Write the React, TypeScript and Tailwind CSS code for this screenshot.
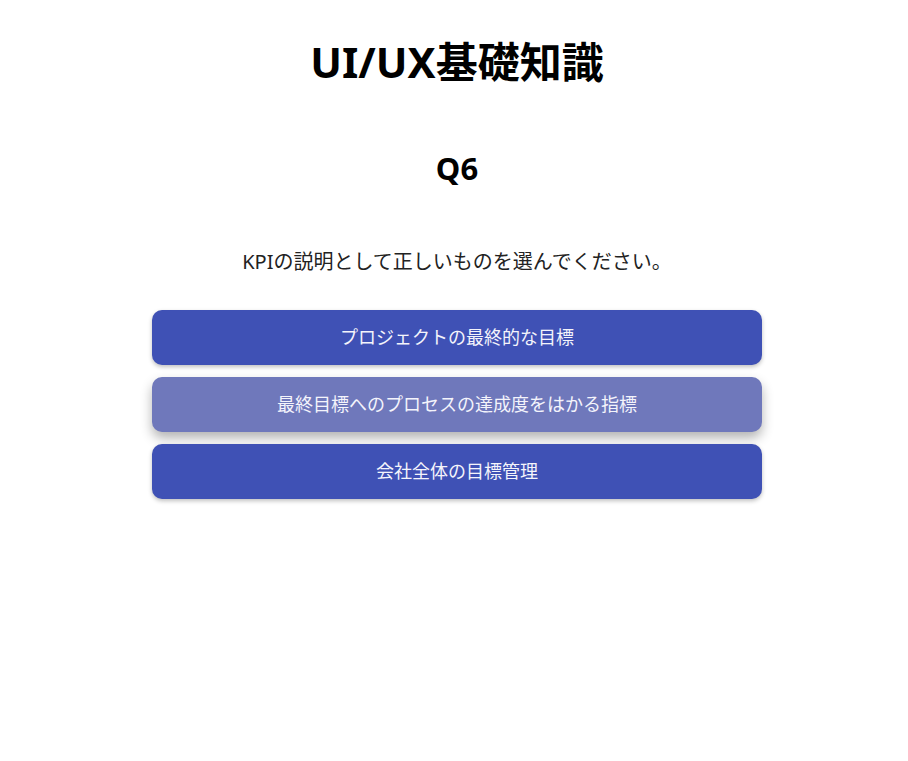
const OPTIONS = [
  "プロジェクトの最終的な目標",
  "最終目標へのプロセスの達成度をはかる指標",
  "会社全体の目標管理",
];

export default function App() {
  const hovered = 1;
  return (
    <div className="min-h-screen bg-white text-black font-['Noto_Sans','Noto_Sans_CJK_JP',sans-serif]">
      <div className="flex flex-col items-center pt-[35px] pl-[6px]">
        <h1 className="text-[42px] font-bold leading-[54px]">UI/UX基礎知識</h1>
        <h2 className="mt-[59px] text-[31px] font-bold leading-[40px]">Q6</h2>
        <p className="mt-[60px] text-[20px] leading-[28px] text-[#222]">
          KPIの説明として正しいものを選んでください。
        </p>
        <div className="mt-[34px] w-[610px] flex flex-col gap-[12px]">
          {OPTIONS.map((label, i) => (
            <button
              key={label}
              className={`h-[55px] rounded-[10px] text-[#f4f4fb] text-[18px] ${
                i === hovered
                  ? "bg-[#6f78bb] shadow-[0_6px_12px_rgba(0,0,0,0.3)]"
                  : "bg-[#3f51b5] shadow-[0_2px_4px_rgba(0,0,0,0.25)]"
              }`}
            >
              {label}
            </button>
          ))}
        </div>
      </div>
    </div>
  );
}
